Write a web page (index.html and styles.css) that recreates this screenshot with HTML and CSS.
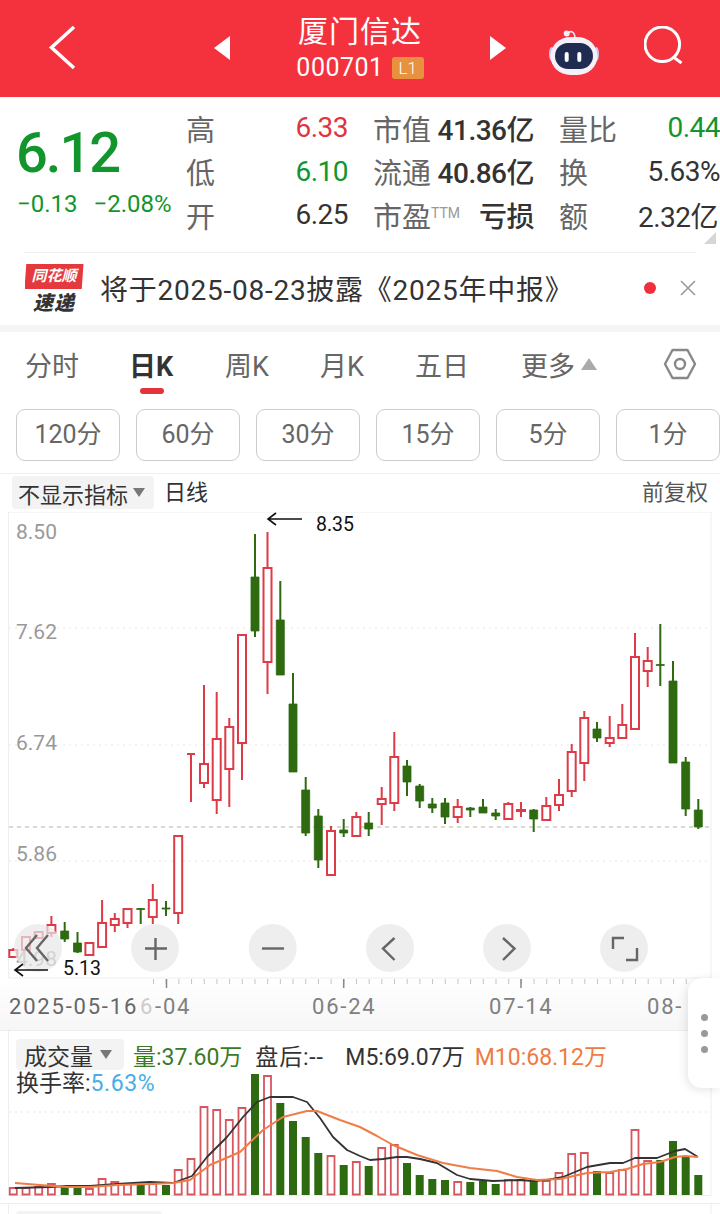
FILE: index.html
```html
<!DOCTYPE html>
<html lang="zh-CN">
<head>
<meta charset="utf-8">
<title>厦门信达</title>
<link rel="stylesheet" href="styles.css">
</head>
<body>
<div class="page">
  <header class="nav">
    <svg class="nav-back" width="214" height="97" viewBox="0 0 214 97"><path d="M74 27 51.500 47.500 74 68" class="wl"/></svg>
    <svg class="nav-tri" width="16" height="24" viewBox="0 0 16 24"><path d="M16 0V24L0 12Z" fill="#fff"/></svg>
    <div class="nav-title">
      <div class="nav-name">厦门信达</div>
      <div class="nav-code"><span>000701</span><span class="badge">L1</span></div>
    </div>
    <svg class="nav-tri" width="16" height="24" viewBox="0 0 16 24"><path d="M0 0V24L16 12Z" fill="#fff"/></svg>
    <svg class="robot" width="50" height="46" viewBox="0 0 50 46">
      <path d="M18 5C21 1 25 2 26 8" fill="none" stroke="#eee6f5" stroke-width="1.600"/>
      <circle cx="17.700" cy="4.500" r="3" fill="#f3eef8"/>
      <ellipse cx="2.600" cy="25" rx="2.600" ry="7" fill="#c9c2ee"/>
      <ellipse cx="47.400" cy="25" rx="2.600" ry="7" fill="#c9c2ee"/>
      <rect x="1.500" y="8" width="47" height="38" rx="20" fill="#f4f1fb"/>
      <rect x="6" y="14" width="38" height="26" rx="13" fill="#1f2b50"/>
      <rect x="15.700" y="23" width="4" height="10" rx="2" fill="#fff"/>
      <rect x="28.300" y="23" width="4" height="10" rx="2" fill="#fff"/>
    </svg>
    <svg class="search" width="42" height="42" viewBox="0 0 42 42"><circle cx="18.300" cy="18.300" r="17.300" class="wl2"/><path d="M30 31.500 37.500 37" class="wl2"/></svg>
  </header>

  <section class="quote">
    <div class="price">
      <div class="price-now">6.12</div>
      <div class="price-change"><span>−0.13</span><span>−2.08%</span></div>
    </div>
    <div class="stats">
      <div class="stat"><span class="lab">高</span><span class="val up">6.33</span></div>
      <div class="stat"><span class="lab">市值</span><span class="val strong">41.36亿</span></div>
      <div class="stat"><span class="lab">量比</span><span class="val down">0.44</span></div>
      <div class="stat"><span class="lab">低</span><span class="val down">6.10</span></div>
      <div class="stat"><span class="lab">流通</span><span class="val strong">40.86亿</span></div>
      <div class="stat"><span class="lab">换</span><span class="val">5.63%</span></div>
      <div class="stat"><span class="lab">开</span><span class="val">6.25</span></div>
      <div class="stat"><span class="lab">市盈<sup class="ttm">TTM</sup></span><span class="val strong">亏损</span></div>
      <div class="stat stat-end"><span class="lab">额</span><span class="val">2.32亿</span></div>
    </div>
    <div class="corner"></div>
  </section>

  <section class="notice">
    <div class="logo">
      <div class="logo-top">同花顺</div>
      <div class="logo-bottom">速递</div>
    </div>
    <div class="notice-text">将于2025-08-23披露《2025年中报》</div>
    <span class="dot"></span>
    <svg class="close" width="16" height="16" viewBox="0 0 16 16"><path d="M1 1 15 15M15 1 1 15" fill="none" stroke="#999" stroke-width="1.600"/></svg>
  </section>

  <nav class="tabs">
    <span class="tab">分时</span>
    <span class="tab active">日K</span>
    <span class="tab">周K</span>
    <span class="tab">月K</span>
    <span class="tab">五日</span>
    <span class="tab more">更多<i class="tri-up"></i>
      <svg class="gear" width="34" height="32" viewBox="0 0 34 32"><path d="M9.500 2H24.500L32 16 24.500 30H9.500L2 16Z" fill="none" stroke="#888" stroke-width="2.400" stroke-linejoin="round"/><circle cx="17" cy="16" r="5" fill="none" stroke="#888" stroke-width="2.400"/></svg>
    </span>
  </nav>

  <div class="periods">
    <span class="period">120分</span>
    <span class="period">60分</span>
    <span class="period">30分</span>
    <span class="period">15分</span>
    <span class="period">5分</span>
    <span class="period">1分</span>
  </div>

  <div class="indicator">
    <span class="pill">不显示指标<i class="tri-down"></i></span>
    <span class="ind-line">日线</span>
    <span class="ind-right">前复权</span>
  </div>

  <div class="charts">
    <svg class="kline" width="720" height="519" viewBox="0 512 720 519">
      <defs><linearGradient id="axisfade" x1="0" y1="0" x2="0" y2="1"><stop offset="0" stop-color="#fff"/><stop offset="1" stop-color="#f6f6f6"/></linearGradient></defs>
      <rect x="0" y="979" width="720" height="52" fill="url(#axisfade)"/>
      <path d="M8.500 512V978H711V512Z" class="frame"/>
      <path d="M9 628H710M9 745H710M9 861H710" class="gridline"/>
      <path d="M9 827H710" class="closeline"/>

      <text x="16" y="539" class="ylab">8.50</text>
      <text x="16" y="639" class="ylab">7.62</text>
      <text x="16" y="750" class="ylab">6.74</text>
      <text x="16" y="861" class="ylab">5.86</text>
      <text x="16" y="966" class="ylab">4.98</text>

      <path class="wick-r" d="M13.300 948V958M26 937V951M38.700 932V938M51.400 916V937M89.400 943V955M102.100 900V947M114.800 913V932M127.500 909V928M152.800 884V924M178.200 836V924M191 754V802M204 685V788M216.700 692V814M229.300 718V807M242 635V780M267.500 532V694M331 826V875M356.300 812V836M381.700 787V825M394.300 732V811M457.700 799V823M508.300 802V819M521 802V817M546.300 797V820M559 779V811M571.700 744V797M584.300 711V781M609.700 716V747M622.300 704V738M635 633V729M647.700 647V687"/>
      <path class="body-r" d="M9.300 950h8v7h-8zM22 937h8v13h-8zM34.700 932h8v6h-8zM47.400 925h8v8h-8zM85.400 943h8v12h-8zM98.100 923h8v24h-8zM110.800 919h8v6h-8zM123.500 909h8v14h-8zM148.800 900h8v17h-8zM174.200 836h8v77h-8zM187 754h8zM200 764h8v19h-8zM212.700 739h8v61h-8zM225.300 727h8v42h-8zM238 635h8v108h-8zM263.500 568h8v94h-8zM327 831h8v44h-8zM352.300 817h8v19h-8zM377.700 799h8v5h-8zM390.300 757h8v46h-8zM453.700 807h8v10h-8zM504.300 804h8v15h-8zM517 810h8v1h-8zM542.300 806h8v14h-8zM555 795h8v10h-8zM567.700 752h8v39h-8zM580.300 718h8v45h-8zM605.700 738h8v5h-8zM618.300 725h8v13h-8zM631 657h8v72h-8zM643.700 661h8v10h-8z"/>
      <path class="wick-g" d="M64.700 922V942M77.500 932V953M140.700 908V924M166 901V916M255 534V637M280.300 581V675M293 673V772M305.700 777V836M318.300 809V868M343.700 819V837M368.700 812V836M407 760V796M419.700 784V808M432.300 798V813M445 798V824M470.300 807V817M483 799V813M495.700 809V820M533.700 809V832M597 722V742M660.300 624V686M673 661V763M685.700 757V816M698.300 799V829"/>
      <path class="body-g" d="M60.700 931h8v8h-8zM73.500 943h8v9h-8zM136.700 908.500h8v1h-8zM162 908h8v1h-8zM251 577h8v54h-8zM276.300 620h8v55h-8zM289 704h8v68h-8zM301.700 790h8v43h-8zM314.300 816h8v44h-8zM339.700 830h8v3h-8zM364.700 823h8v6h-8zM403 766h8v16h-8zM415.700 786h8v15h-8zM428.300 804h8v4h-8zM441 803h8v14h-8zM466.300 808h8v2h-8zM479 807h8v6h-8zM491.700 813h8v3h-8zM529.700 810h8v9h-8zM593 729h8v9h-8zM656.300 664.500h8v1h-8zM669 681h8v82h-8zM681.700 762h8v47h-8zM694.300 810h8v17h-8z"/>

      <path class="ticks" d="M153 981.500H688"/>
      <path class="ticks-major" d="M166.500 979V988M343.700 979V988M521 979V988"/>

      <circle cx="38" cy="948" r="24" class="round"/>
      <circle cx="155" cy="948" r="24" class="round"/>
      <circle cx="272.700" cy="948" r="24" class="round"/>
      <circle cx="390" cy="948" r="24" class="round"/>
      <circle cx="507" cy="948" r="24" class="round"/>
      <circle cx="624" cy="948" r="24" class="round"/>
      <path class="round-ic" d="M37 935 26 948 37 961M48 935 37 948 48 961"/>
      <path class="round-ic" d="M145 948.500H167M155.500 938V960"/>
      <path class="round-ic" d="M262 948.500H284"/>
      <path class="round-ic" d="M394.500 938 383 948.500 394.500 960"/>
      <path class="round-ic" d="M503 938 514.500 948.500 503 960"/>
      <path class="round-ic" d="M613 949V938H624M637 948V960H626"/>

      <path class="arrow" d="M268 519H302M276 513 268 519 276 525"/>
      <text x="316" y="531" class="note">8.35</text>
      <path class="arrow" d="M15 970H48M23 964 15 970 23 976"/>
      <text x="63" y="975" class="note">5.13</text>

      <text x="9" y="1014" class="date date-strong">2025-05-16</text>
      <text x="140" y="1014" class="date date-ghost">6</text>
      <text x="155" y="1014" class="date">-04</text>
      <text x="312" y="1014" class="date">06-24</text>
      <text x="489" y="1014" class="date">07-14</text>
      <text x="647" y="1014" class="date">08-</text>
      <path d="M0 1030.500H720" class="frame"/>
    </svg>

    <div class="vol">
      <svg class="vol-svg" width="720" height="183" viewBox="0 1031 720 183">
        <path d="M8.500 1031V1195.500H711V1031" class="frame"/>
        <path d="M9 1112H710" class="gridline"/>
        <path class="vol-r" d="M9.800 1188h7v6.500h-7zM22.500 1188h7v6.500h-7zM35.200 1187h7v7.500h-7zM47.900 1184h7v10.500h-7zM85.900 1189h7v5.500h-7zM98.600 1179h7v15.500h-7zM111.300 1182h7v12.500h-7zM124 1184h7v10.500h-7zM149.300 1184h7v10.500h-7zM174.700 1170h7v24.500h-7zM187.500 1159h7v35.500h-7zM200.500 1107h7v87.500h-7zM213.200 1110h7v84.500h-7zM225.800 1120h7v74.500h-7zM238.500 1108h7v86.500h-7zM264 1076h7v118.500h-7zM327.500 1156h7v38.500h-7zM352.800 1162h7v32.500h-7zM378.200 1148h7v46.500h-7zM390.800 1145h7v49.500h-7zM454.200 1182h7v12.500h-7zM504.800 1180h7v14.500h-7zM517.500 1180h7v14.500h-7zM542.800 1181h7v13.500h-7zM555.500 1173h7v21.500h-7zM568.200 1154h7v40.500h-7zM580.800 1153h7v41.500h-7zM606.200 1173h7v21.500h-7zM618.800 1170h7v24.500h-7zM631.500 1130h7v64.500h-7zM644.200 1161h7v33.500h-7z"/>
        <path class="vol-g" d="M60.700 1187h8v8h-8zM73.500 1187h8v8h-8zM136.700 1185h8v10h-8zM162 1185h8v10h-8zM251 1074h8v121h-8zM276.300 1103h8v92h-8zM289 1121h8v74h-8zM301.700 1137h8v58h-8zM314.300 1153h8v42h-8zM339.700 1165h8v30h-8zM364.700 1166h8v29h-8zM403 1163h8v32h-8zM415.700 1175h8v20h-8zM428.300 1179h8v16h-8zM441 1180h8v15h-8zM466.300 1182h8v13h-8zM479 1181h8v14h-8zM491.700 1184h8v11h-8zM529.700 1181h8v14h-8zM593 1171h8v24h-8zM656.300 1160h8v35h-8zM669 1141h8v54h-8zM681.700 1157h8v38h-8zM694.300 1175h8v20h-8z"/>
        <polyline class="ma5" points="15,1188 50,1187 67,1186 90,1186 117,1184 150,1182 173,1183 192,1176 207,1157 227,1137 243,1117 257,1102 270,1097 293,1097 307,1102 320,1118 333,1137 347,1150 360,1156 370,1160 383,1159 397,1157 407,1157 420,1159 437,1163 457,1175 470,1179 493,1181 520,1180 533,1181 547,1180 563,1177 587,1167 610,1163 623,1163 635,1158 657,1158 675,1151 685,1149 698,1157"/>
        <polyline class="ma10" points="15,1183 40,1185 67,1187 90,1187 117,1185 150,1184 173,1183 190,1180 210,1165 240,1152 263,1130 283,1117 307,1111 317,1111 340,1120 360,1127 377,1136 393,1145 417,1155 443,1163 470,1168 497,1171 517,1177 537,1180 560,1179 587,1173 610,1172 627,1169 643,1164 660,1162 675,1157 685,1156 698,1157"/>
        <path d="M0 1203.500H720" class="frame"/>
        <path d="M8.500 1204V1214M711 1204V1214" class="frame"/>
        <rect x="16" y="1211" width="146" height="6" rx="3" fill="#f3f3f3"/>
      </svg>
      <div class="vol-head">
        <div class="vol-row">
          <span class="vol-pill">成交量<i class="tri-down"></i></span>
          <span class="vol-green">量:37.60万</span>
          <span class="vol-after">盘后:--</span>
          <span class="tight">M5:69.07万</span>
          <span class="tight vol-orange">M10:68.12万</span>
        </div>
        <div class="vol-rate">换手率:<span class="vol-blue">5.63%</span></div>
      </div>
    </div>

    <div class="side-tab"><i></i><i></i><i></i></div>
  </div>
</div>
</body>
</html>
```

FILE: styles.css
```css
* { box-sizing: border-box; }
html, body { margin: 0; padding: 0; background: #fff; }
body { font-family: Roboto, "Noto Sans CJK SC", sans-serif; color: #333; }
.page { width: 720px; height: 1214px; overflow: hidden; }

/* top bar */
.nav { height: 97px; background: #f4323e; display: flex; align-items: center; color: #fff; }
.nav-back { flex: none; }
.nav-tri { flex: none; margin-top: -1px; }
.wl { fill: none; stroke: #fff; stroke-width: 3.5; }
.wl2 { fill: none; stroke: #fff; stroke-width: 3; }
.nav-title { width: 260px; flex: none; display: flex; flex-direction: column; align-items: center; }
.nav-name { font-size: 30px; line-height: 44px; letter-spacing: 1px; margin-top: -4px; }
.nav-code { display: flex; align-items: center; gap: 8px; font-size: 25px; letter-spacing: .5px; line-height: 30px; margin-top: -1px; }
.badge { width: 32px; height: 22px; background: #e8923f; border-radius: 3px; font-size: 17px; font-weight: 300; line-height: 22px; text-align: center; letter-spacing: 0; }
.robot { flex: none; margin-left: 43px; margin-top: 7px; }
.search { flex: none; margin-left: 45px; margin-top: -3px; }

/* quote block */
.quote { position: relative; height: 156px; display: flex; }
.quote::after { content: ""; position: absolute; left: 24px; right: 24px; bottom: 0; height: 1px; background: #f0f0f0; }
.price { width: 186px; flex: none; padding-left: 16px; padding-top: 24px; color: #12952c; }
.price-now { font-size: 56px; line-height: 64px; font-weight: 500; letter-spacing: -2px; }
.price-change { display: flex; gap: 16px; font-size: 24px; line-height: 30px; margin-top: 4px; padding-left: 1px; white-space: nowrap; }
.stats { flex: 1; display: grid; grid-template-columns: 162px 161px 161px; column-gap: 25px; grid-auto-rows: 43.5px; padding-top: 9px; margin-right: -21px; width: 534px; }
.stat { display: flex; justify-content: space-between; align-items: center; }
.stat-end { padding-right: 2px; }
.lab { font-size: 29px; color: #666; white-space: nowrap; }
.ttm { font-size: 14px; color: #999; vertical-align: 10px; line-height: 0; margin-left: 0; }
.val { font-size: 28px; letter-spacing: -.5px; color: #333; white-space: nowrap; }
.val.strong { font-weight: 500; }
.val.up { color: #e0343f; }
.val.down { color: #12952c; }
.corner { position: absolute; right: 4px; bottom: 9px; width: 12px; height: 12px; background: #d6d6d6; clip-path: polygon(100% 0, 100% 100%, 0 100%); }

/* notice */
.notice { display: flex; align-items: center; padding: 4px 0 7px 24px; border-bottom: 7px solid #f5f5f5; height: 79px; position: relative; }
.logo { width: 60px; flex: none; display: flex; flex-direction: column; align-items: center; margin-top: 4px; }
.logo-top { width: 59px; height: 25px; background: #e43a3d; color: #fff; font-size: 15px; line-height: 25px; font-weight: 700; font-style: italic; text-align: center; clip-path: polygon(3% 0, 100% 0, 97% 100%, 60% 100%, 52% 120%, 44% 100%, 0 100%); }
.logo-bottom { font-size: 20px; line-height: 24px; font-weight: 900; font-style: italic; color: #333; margin-top: 2px; letter-spacing: 1px; }
.notice-text { font-size: 28px; letter-spacing: .75px; margin-left: 16px; color: #333; white-space: nowrap; }
.dot { position: absolute; left: 644px; top: 29px; width: 12px; height: 12px; border-radius: 50%; background: #ee2f3c; }
.close { position: absolute; left: 680px; top: 27px; }

/* tabs */
.tabs { height: 68px; display: grid; grid-template-columns: 104px 96px 95px 95px 106px 1fr; align-items: center; padding: 0 0 4px 25px; font-size: 27px; color: #666; }
.tab { position: relative; white-space: nowrap; }
.tab.active { color: #333; font-weight: 700; }
.tab.active::after { content: ""; position: absolute; left: 11px; top: 43px; width: 24px; height: 6px; border-radius: 3px; background: #e5333b; }
.more { display: flex; align-items: center; }
.tri-up { width: 0; height: 0; margin-left: 6px; border-left: 8px solid transparent; border-right: 8px solid transparent; border-bottom: 12px solid #aaa; }
.gear { margin-left: 66px; }

/* periods */
.periods { display: flex; gap: 16px; padding: 9px 0 12px 16px; border-bottom: 1px solid #eee; }
.period { width: 104px; height: 52px; flex: none; border: 1px solid #ccc; border-radius: 9px; font-size: 25px; line-height: 50px; text-align: center; color: #666; white-space: nowrap; }

/* indicator row */
.indicator { height: 38px; display: flex; align-items: flex-start; padding: 2px 12px 0 12px; font-size: 22px; color: #333; }
.pill { width: 142px; height: 33px; background: #f3f3f3; border-radius: 4px; padding-left: 6px; display: flex; align-items: center; white-space: nowrap; }
.tri-down { display: inline-block; width: 0; height: 0; margin-left: 5px; border-left: 6.500px solid transparent; border-right: 6.500px solid transparent; border-top: 9px solid #777; }
.ind-line { margin-left: 10px; line-height: 33px; }
.ind-right { margin-left: auto; line-height: 33px; color: #555; }

/* charts */
.charts { position: relative; }
.kline, .vol-svg { display: block; }
.frame { fill: none; stroke: #eee; stroke-width: 1; }
.gridline { fill: none; stroke: #e6e6e6; stroke-width: 1; stroke-dasharray: 2 4; }
.closeline { fill: none; stroke: #b9b49a; stroke-width: 1; stroke-dasharray: 4 4; }
.ylab { font-size: 21px; fill: #999; }
.wick-r { fill: none; stroke: #dd3b47; stroke-width: 2; }
.body-r { fill: #fff; stroke: #dd3b47; stroke-width: 2; }
.wick-g { fill: none; stroke: #2f6a12; stroke-width: 2; }
.body-g { fill: #2d6a10; stroke: #2d6a10; stroke-width: .8; }
.ticks { fill: none; stroke: #c4c4c4; stroke-width: 5; stroke-dasharray: 1 11.685; }
.ticks-major { fill: none; stroke: #888; stroke-width: 1.500; }
.round { fill: rgba(232, 232, 232, .72); }
.round-ic { fill: none; stroke: #666; stroke-width: 2.400; }
.arrow { fill: none; stroke: #111; stroke-width: 1.600; }
.note { font-size: 19.500px; fill: #111; }
.date { font-size: 22px; fill: #808080; letter-spacing: 1.800px; }
.date-strong { fill: #666; }
.date-ghost { fill: #ccc; }

/* volume */
.vol { position: relative; }
.vol-head { position: absolute; left: 16px; top: 8px; font-size: 23px; color: #333; }
.vol-row { display: flex; align-items: center; gap: 13px; height: 31px; white-space: nowrap; }
.vol-pill { width: 108px; height: 31px; background: #f3f3f3; border-radius: 4px; padding-left: 8px; display: flex; align-items: center; margin-right: -4px; }
.vol-pill .tri-down { margin-left: 7px; }
.vol-after { width: 80px; letter-spacing: .8px; }
.tight { margin-left: -3px; }
.vol-green { color: #3a7a24; }
.vol-orange { color: #ee7b45; }
.vol-blue { color: #47aee6; letter-spacing: .6px; }
.vol-rate { line-height: 26px; margin-top: 1px; }
.ma5 { fill: none; stroke: #333; stroke-width: 1.800; stroke-linejoin: round; }
.ma10 { fill: none; stroke: #f07c46; stroke-width: 2; stroke-linejoin: round; }
.vol-r { fill: #fff; stroke: #d8565e; stroke-width: 1.800; }
.vol-g { fill: #2d6a10; }

/* floating side handle */
.side-tab { position: absolute; right: 0; top: 466px; width: 32px; height: 110px; background: #fff; border-radius: 14px 0 0 14px; box-shadow: -2px 2px 10px rgba(0, 0, 0, .10); display: flex; flex-direction: column; align-items: center; justify-content: center; gap: 9px; }
.side-tab i { width: 7px; height: 7px; border-radius: 50%; background: #999; }
```
